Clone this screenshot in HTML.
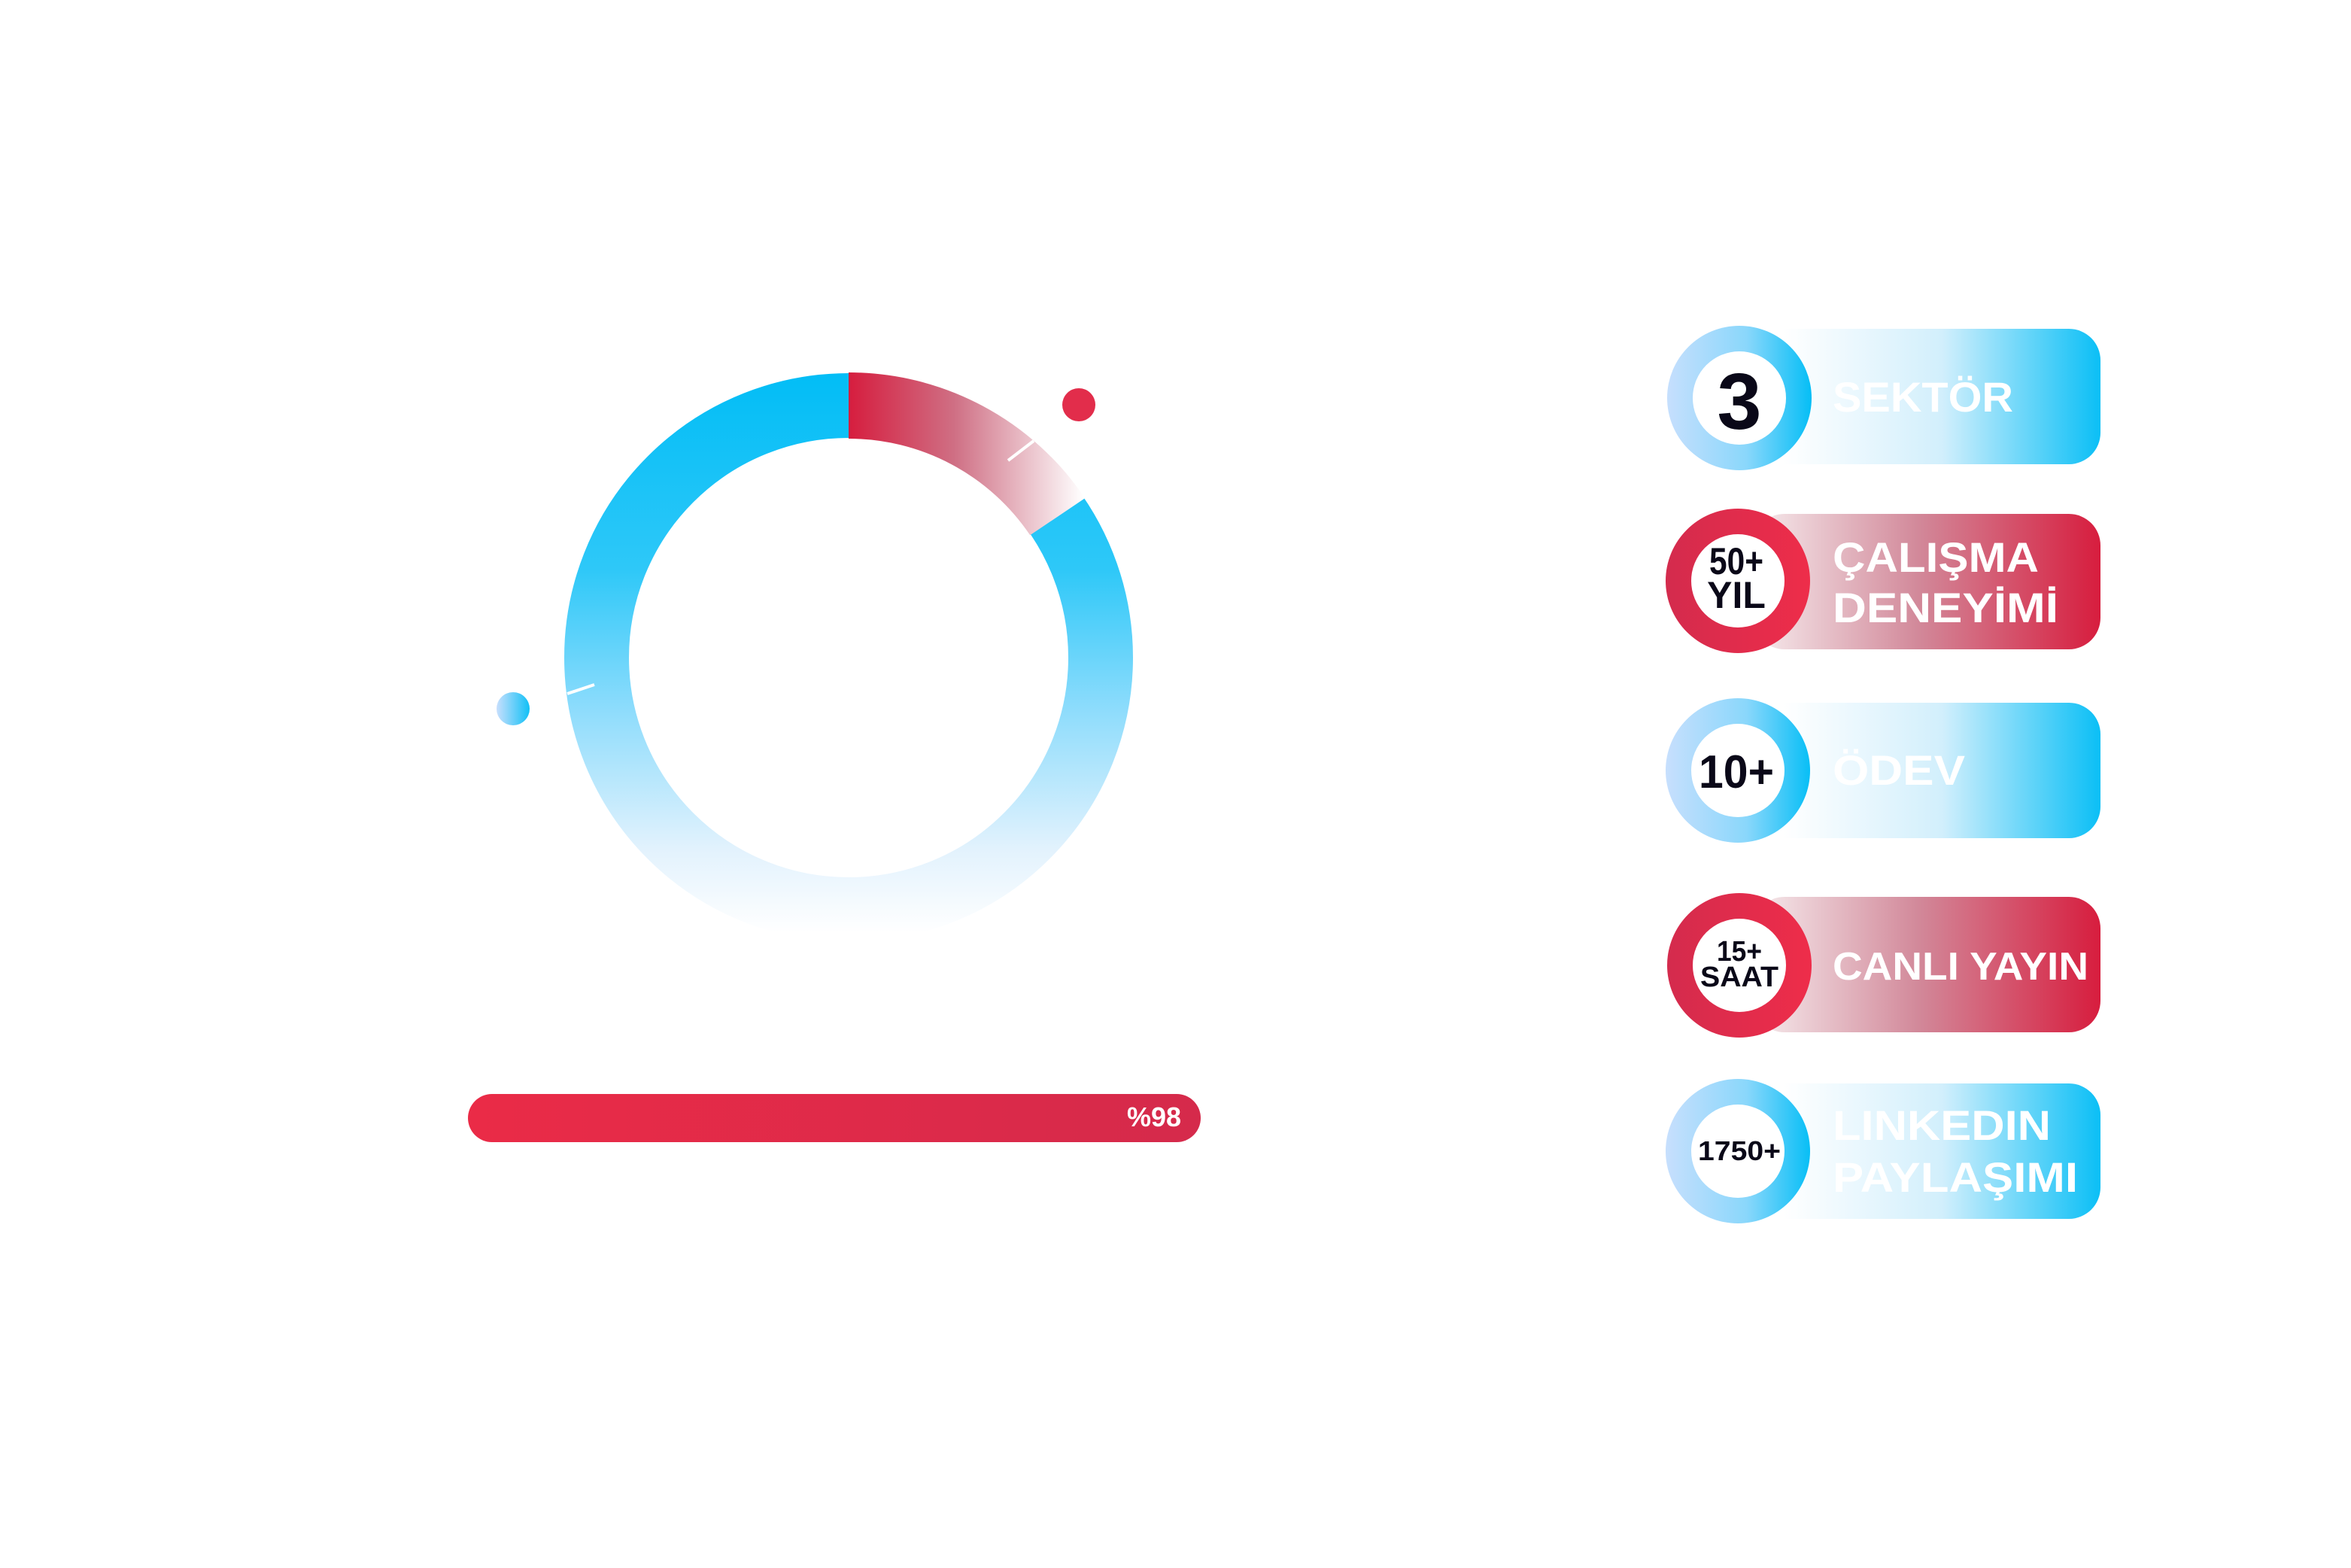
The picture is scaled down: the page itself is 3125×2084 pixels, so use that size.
<!DOCTYPE html>
<html><head><meta charset="utf-8"><style>html,body{margin:0;padding:0;background:#fff}svg{display:block}text{font-family:"Liberation Sans",sans-serif;font-weight:bold}</style></head>
<body>
<svg width="3125" height="2084" viewBox="0 0 3125 2084" xmlns="http://www.w3.org/2000/svg">
<defs>
<linearGradient id="ringB" x1="0" y1="496" x2="0" y2="1240" gradientUnits="userSpaceOnUse">
<stop offset="0" stop-color="#02bdf6"/><stop offset="0.35" stop-color="#2ec8f8"/><stop offset="0.6" stop-color="#8ddcfc"/><stop offset="0.85" stop-color="#e2f2fd"/><stop offset="1" stop-color="#ffffff"/></linearGradient>
<linearGradient id="ringR" x1="1128" y1="0" x2="1440" y2="0" gradientUnits="userSpaceOnUse">
<stop offset="0" stop-color="#d61d3e"/><stop offset="0.45" stop-color="#cf6f84"/><stop offset="1" stop-color="#ffffff"/></linearGradient>
<linearGradient id="bdot" x1="0" x2="1" y1="0" y2="0"><stop offset="0" stop-color="#c8dffd"/><stop offset="1" stop-color="#10c0f6"/></linearGradient>
<linearGradient id="bar" x1="0" x2="1"><stop offset="0" stop-color="#ea2b47"/><stop offset="1" stop-color="#d52a4b"/></linearGradient>
<linearGradient id="cardB" x1="2370" x2="2792" y1="0" y2="0" gradientUnits="userSpaceOnUse"><stop offset="0" stop-color="#ffffff"/><stop offset="0.5" stop-color="#d2effc"/><stop offset="1" stop-color="#0bbff6"/></linearGradient>
<linearGradient id="cardR" x1="2350" x2="2792" y1="0" y2="0" gradientUnits="userSpaceOnUse"><stop offset="0" stop-color="#f3e3e6"/><stop offset="0.45" stop-color="#d2899a"/><stop offset="1" stop-color="#d71d3e"/></linearGradient>
<linearGradient id="circB" x1="2216" x2="2408" y1="0" y2="0" gradientUnits="userSpaceOnUse"><stop offset="0" stop-color="#c6dffd"/><stop offset="0.55" stop-color="#8ad7fb"/><stop offset="1" stop-color="#05bef6"/></linearGradient>
<linearGradient id="circR" x1="2216" x2="2408" y1="0" y2="0" gradientUnits="userSpaceOnUse"><stop offset="0" stop-color="#d42b4d"/><stop offset="1" stop-color="#ee2d4a"/></linearGradient>
</defs>

<!-- ring -->
<circle cx="1128" cy="874" r="335" fill="none" stroke="url(#ringB)" stroke-width="86"/>
<path d="M1128 539 A335 335 0 0 1 1405.7 686.7" fill="none" stroke="url(#ringR)" stroke-width="88"/>
<line x1="1340" y1="612" x2="1374" y2="586" stroke="#fff" stroke-width="4"/>
<line x1="754" y1="922" x2="790" y2="910" stroke="#fff" stroke-width="4"/>
<circle cx="1434" cy="538" r="22" fill="#e22d4b"/>
<circle cx="682" cy="942" r="22" fill="url(#bdot)"/>

<!-- bar -->
<rect x="622" y="1454" width="974" height="64" rx="32" fill="url(#bar)"/>
<text x="1570" y="1497" font-size="36" fill="#fff" text-anchor="end">%98</text>

<!-- card 1 -->
<rect x="2330" y="437" width="462" height="180" rx="42" fill="url(#cardB)"/>
<circle cx="2312" cy="529" r="96" fill="url(#circB)"/>
<circle cx="2312" cy="529" r="62" fill="#fff"/>
<text x="2312" y="570" font-size="106" fill="#0a0818" text-anchor="middle">3</text>
<text x="2436" y="547" font-size="56" fill="#fff" textLength="240" lengthAdjust="spacingAndGlyphs">SEKTÖR</text>

<!-- card 2 -->
<rect x="2330" y="683" width="462" height="180" rx="42" fill="url(#cardR)"/>
<circle cx="2310" cy="772" r="96" fill="url(#circR)"/>
<circle cx="2310" cy="772" r="62" fill="#fff"/>
<text x="2308" y="763" font-size="50" fill="#0a0818" text-anchor="middle" textLength="72" lengthAdjust="spacingAndGlyphs">50+</text>
<text x="2308" y="808" font-size="50" fill="#0a0818" text-anchor="middle">YIL</text>
<text x="2436" y="760" font-size="56" fill="#fff" textLength="274" lengthAdjust="spacingAndGlyphs">ÇALIŞMA</text>
<text x="2436" y="827" font-size="56" fill="#fff" textLength="300" lengthAdjust="spacingAndGlyphs">DENEYİMİ</text>

<!-- card 3 -->
<rect x="2330" y="934" width="462" height="180" rx="42" fill="url(#cardB)"/>
<circle cx="2310" cy="1024" r="96" fill="url(#circB)"/>
<circle cx="2310" cy="1024" r="62" fill="#fff"/>
<text x="2308" y="1047" font-size="62" fill="#0a0818" text-anchor="middle" textLength="100" lengthAdjust="spacingAndGlyphs">10+</text>
<text x="2436" y="1043" font-size="56" fill="#fff" textLength="176" lengthAdjust="spacingAndGlyphs">ÖDEV</text>

<!-- card 4 -->
<rect x="2330" y="1192" width="462" height="180" rx="42" fill="url(#cardR)"/>
<circle cx="2312" cy="1283" r="96" fill="url(#circR)"/>
<circle cx="2312" cy="1283" r="62" fill="#fff"/>
<text x="2312" y="1277" font-size="38" fill="#0a0818" text-anchor="middle" textLength="60" lengthAdjust="spacingAndGlyphs">15+</text>
<text x="2312" y="1311" font-size="38" fill="#0a0818" text-anchor="middle" textLength="104" lengthAdjust="spacingAndGlyphs">SAAT</text>
<text x="2436" y="1302" font-size="52" fill="#fff" textLength="340" lengthAdjust="spacingAndGlyphs">CANLI YAYIN</text>

<!-- card 5 -->
<rect x="2330" y="1440" width="462" height="180" rx="42" fill="url(#cardB)"/>
<circle cx="2310" cy="1530" r="96" fill="url(#circB)"/>
<circle cx="2310" cy="1530" r="62" fill="#fff"/>
<text x="2312" y="1542" font-size="36" fill="#0a0818" text-anchor="middle" textLength="110" lengthAdjust="spacingAndGlyphs">1750+</text>
<text x="2436" y="1515" font-size="56" fill="#fff" textLength="290" lengthAdjust="spacingAndGlyphs">LINKEDIN</text>
<text x="2436" y="1584" font-size="56" fill="#fff" textLength="326" lengthAdjust="spacingAndGlyphs">PAYLAŞIMI</text>
</svg>
</body></html>
